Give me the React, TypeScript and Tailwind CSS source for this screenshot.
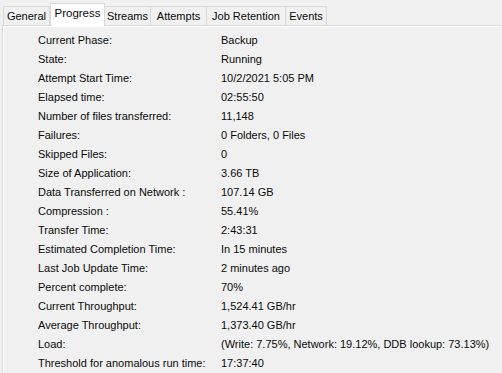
import React from "react";

const TABS = ["General", "Progress", "Streams", "Attempts", "Job Retention", "Events"];
const TAB_W: Record<string, string> = {
  General: "w-[47px]",
  Progress: "w-[55px]",
  Streams: "w-[47px]",
  Attempts: "w-[57px]",
  "Job Retention": "w-[80px]",
  Events: "w-[42px]",
};

const ROWS: [string, string][] = [
  ["Current Phase:", "Backup"],
  ["State:", "Running"],
  ["Attempt Start Time:", "10/2/2021 5:05 PM"],
  ["Elapsed time:", "02:55:50"],
  ["Number of files transferred:", "11,148"],
  ["Failures:", "0 Folders, 0 Files"],
  ["Skipped Files:", "0"],
  ["Size of Application:", "3.66 TB"],
  ["Data Transferred on Network :", "107.14 GB"],
  ["Compression :", "55.41%"],
  ["Transfer Time:", "2:43:31"],
  ["Estimated Completion Time:", "In 15 minutes"],
  ["Last Job Update Time:", "2 minutes ago"],
  ["Percent complete:", "70%"],
  ["Current Throughput:", "1,524.41 GB/hr"],
  ["Average Throughput:", "1,373.40 GB/hr"],
  ["Load:", "(Write: 7.75%, Network: 19.12%, DDB lookup: 73.13%)"],
  ["Threshold for anomalous run time:", "17:37:40"],
];

export default function App() {
  const active = "Progress";
  return (
    <div className="flex h-[373px] w-[502px] flex-col overflow-hidden bg-[#f0f0f0] font-['Liberation_Sans',Arial,sans-serif] text-[11px] text-[#0a0a0a]">
      {/* Tab strip */}
      <div className="flex h-[25px] shrink-0 items-end pl-[3px]">
        {TABS.map((t) =>
          t === active ? (
            <div
              key={t}
              className={`relative z-10 -mb-px flex h-[23px] ${TAB_W[t]} items-center justify-center border border-b-0 border-[#d9d9d9] bg-white pb-[3px] text-[11.5px]`}
            >
              {t}
            </div>
          ) : (
            <div
              key={t}
              className={`-ml-px flex h-[19px] ${TAB_W[t]} items-center justify-center border border-b-0 border-[#d9d9d9] bg-[#f0f0f0] first:ml-0`}
            >
              {t}
            </div>
          )
        )}
      </div>

      {/* Panel */}
      <div className="ml-[2px] flex-1 border-l border-t border-[#d9d9d9]">
        <div className="h-full border-l border-t border-white pt-[4px]">
          <div className="grid grid-cols-[183px_1fr] pl-[34px]">
            {ROWS.map(([label, value]) => (
              <React.Fragment key={label}>
                <div className="flex h-[19px] items-center whitespace-nowrap">{label}</div>
                <div className="flex h-[19px] items-center whitespace-nowrap">{value}</div>
              </React.Fragment>
            ))}
          </div>
        </div>
      </div>
    </div>
  );
}
